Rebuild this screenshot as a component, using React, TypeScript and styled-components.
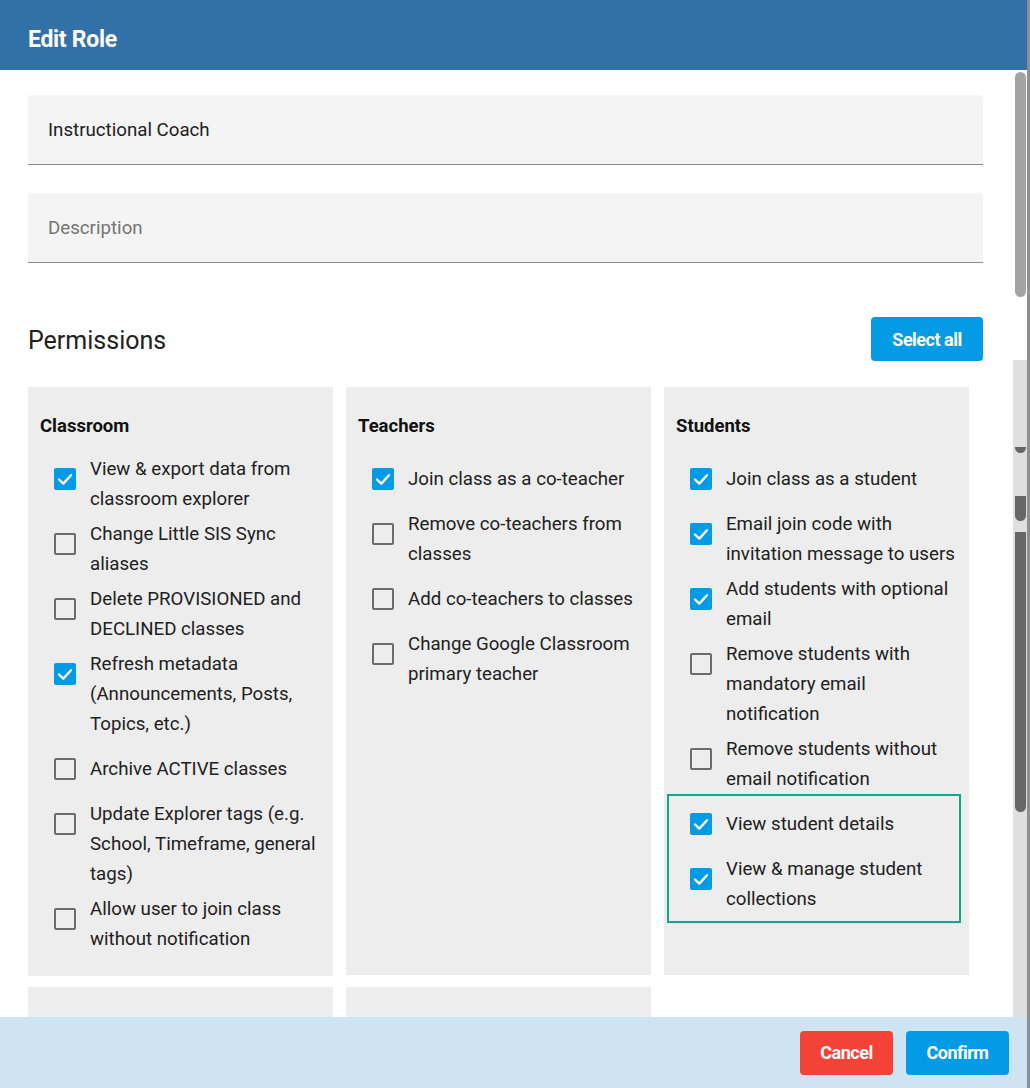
import React, { useState } from 'react';
import styled, { createGlobalStyle } from 'styled-components';

const GlobalStyle = createGlobalStyle`
  html, body {
    margin: 0;
    padding: 0;
    overflow: hidden;
    background: #ffffff;
    font-family: Roboto, "Liberation Sans", sans-serif;
  }
  * {
    box-sizing: border-box;
  }
`;

const Page = styled.div`
  width: 1030px;
  height: 1088px;
  display: flex;
`;

const Dialog = styled.div`
  flex: 1;
  display: flex;
  flex-direction: column;
  min-width: 0;
`;

const Edge = styled.div`
  width: 3px;
  background: #8f8f8f;
`;

const Header = styled.header`
  height: 70px;
  flex-shrink: 0;
  background: #3270a8;
  display: flex;
  align-items: center;
  padding: 9px 28px 0;
`;

const Title = styled.h1`
  margin: 0;
  color: #ffffff;
  font-size: 23px;
  font-weight: 700;
  letter-spacing: -0.3px;
`;

const Body = styled.div`
  flex: 1;
  display: flex;
  min-height: 0;
`;

const Content = styled.div`
  flex: 1;
  overflow: hidden;
  padding: 25px 30px 0 28px;
`;

const Field = styled.div<{ $gap?: number }>`
  height: 70px;
  margin-bottom: ${(p) => p.$gap ?? 0}px;
  background: #f4f4f4;
  border-radius: 4px 4px 0 0;
  border-bottom: 1px solid #8a8a8a;
  display: flex;
  align-items: center;
  padding: 0 20px;
`;

const FieldText = styled.span<{ $placeholder?: boolean }>`
  font-size: 18.7px;
  color: ${(p) => (p.$placeholder ? '#757575' : '#212121')};
`;

const SectionRow = styled.div`
  margin-top: 54px;
  display: flex;
  align-items: center;
  justify-content: space-between;
`;

const SectionTitle = styled.h2`
  margin: 0;
  padding-top: 3px;
  font-size: 25px;
  font-weight: 400;
  color: #212121;
`;

const Button = styled.button<{ $tone: 'blue' | 'red'; $width: number }>`
  height: 44px;
  width: ${(p) => p.$width}px;
  border: none;
  border-radius: 4px;
  background: ${(p) => (p.$tone === 'red' ? '#f44336' : '#039be5')};
  color: #ffffff;
  font-family: Roboto, "Liberation Sans", sans-serif;
  font-size: 18px;
  font-weight: 700;
  letter-spacing: -0.5px;
  cursor: pointer;
  padding: 0;
`;

const Grid = styled.div`
  margin-top: 26px;
  display: grid;
  grid-template-columns: repeat(3, 305px);
  column-gap: 13px;
  row-gap: 11px;
  align-items: start;
`;

const Card = styled.div<{ $height?: number }>`
  background: #ededed;
  padding: 27px 12px 22px;
  min-height: ${(p) => p.$height ?? 0}px;
  display: flex;
  flex-direction: column;
  gap: 5px;
`;

const CardTitle = styled.h3`
  margin: 0 0 11px;
  font-size: 18.5px;
  line-height: 24px;
  font-weight: 700;
  color: #111111;
`;

const Item = styled.label`
  display: flex;
  align-items: flex-start;
  cursor: pointer;
`;

const BoxSlot = styled.span`
  width: 50px;
  height: 50px;
  flex-shrink: 0;
  display: flex;
  align-items: center;
  justify-content: center;
`;

const Box = styled.span<{ $checked: boolean }>`
  width: 22px;
  height: 22px;
  border-radius: 2px;
  display: flex;
  align-items: center;
  justify-content: center;
  background: ${(p) => (p.$checked ? '#039be5' : 'transparent')};
  border: ${(p) => (p.$checked ? 'none' : '2px solid #6b6b6b')};
`;

const Label = styled.span`
  min-height: 50px;
  display: flex;
  align-items: center;
  font-size: 18.7px;
  line-height: 30px;
  color: #212121;
`;

const Highlight = styled.div`
  margin: -5px -4px 0 -9px;
  padding: 3px 2px 7px 7px;
  border: 2px solid #0fa889;
  display: flex;
  flex-direction: column;
  gap: 5px;
`;

const Rail = styled.div`
  width: 14px;
  display: flex;
  flex-direction: column;
`;

const LightThumb = styled.div`
  margin: 2px 0 0 2px;
  width: 11px;
  height: 225px;
  border-radius: 6px;
  background: #a3a3a3;
`;

const Track = styled.div`
  margin-top: 63px;
  flex: 1;
  background: #dfdfdf;
  display: flex;
  flex-direction: column;
  padding-left: 2px;
`;

const DarkPiece = styled.div<{ $top: number; $height: number; $round: string }>`
  margin-top: ${(p) => p.$top}px;
  width: 11px;
  height: ${(p) => p.$height}px;
  background: #666666;
  border-radius: ${(p) => p.$round};
`;

const Footer = styled.footer`
  height: 71px;
  flex-shrink: 0;
  background: #cfe4f2;
  display: flex;
  align-items: center;
  justify-content: flex-end;
  gap: 13px;
  padding: 0 18px 0 0;
`;

type Perm = { label: string; checked: boolean };

const Check = () => (
  <svg width="22" height="22" viewBox="0 0 22 22">
    <polyline
      points="5,11.5 9.3,15.6 17,7.2"
      fill="none"
      stroke="#ffffff"
      strokeWidth="2.4"
      strokeLinecap="round"
      strokeLinejoin="round"
    />
  </svg>
);

function PermItem({ perm, onToggle }: { perm: Perm; onToggle: () => void }) {
  return (
    <Item onClick={onToggle}>
      <BoxSlot>
        <Box $checked={perm.checked}>{perm.checked ? <Check /> : null}</Box>
      </BoxSlot>
      <Label>{perm.label}</Label>
    </Item>
  );
}

const initial: Record<string, Perm[]> = {
  Classroom: [
    { label: 'View & export data from classroom explorer', checked: true },
    { label: 'Change Little SIS Sync aliases', checked: false },
    { label: 'Delete PROVISIONED and DECLINED classes', checked: false },
    { label: 'Refresh metadata (Announcements, Posts, Topics, etc.)', checked: true },
    { label: 'Archive ACTIVE classes', checked: false },
    { label: 'Update Explorer tags (e.g. School, Timeframe, general tags)', checked: false },
    { label: 'Allow user to join class without notification', checked: false },
  ],
  Teachers: [
    { label: 'Join class as a co-teacher', checked: true },
    { label: 'Remove co-teachers from classes', checked: false },
    { label: 'Add co-teachers to classes', checked: false },
    { label: 'Change Google Classroom primary teacher', checked: false },
  ],
  Students: [
    { label: 'Join class as a student', checked: true },
    { label: 'Email join code with invitation message to users', checked: true },
    { label: 'Add students with optional email', checked: true },
    { label: 'Remove students with mandatory email notification', checked: false },
    { label: 'Remove students without email notification', checked: false },
    { label: 'View student details', checked: true },
    { label: 'View & manage student collections', checked: true },
  ],
};

export default function App() {
  const [perms, setPerms] = useState(initial);

  const toggle = (group: string, index: number) => {
    setPerms((prev) => ({
      ...prev,
      [group]: prev[group].map((p, i) => (i === index ? { ...p, checked: !p.checked } : p)),
    }));
  };

  const selectAll = () => {
    const next: Record<string, Perm[]> = {};
    Object.keys(perms).forEach((k) => {
      next[k] = perms[k].map((p) => ({ ...p, checked: true }));
    });
    setPerms(next);
  };

  const students = perms.Students;

  return (
    <>
      <GlobalStyle />
      <Page>
        <Dialog>
          <Header>
            <Title>Edit Role</Title>
          </Header>
          <Body>
            <Content>
              <Field $gap={28}>
                <FieldText>Instructional Coach</FieldText>
              </Field>
              <Field>
                <FieldText $placeholder>Description</FieldText>
              </Field>

              <SectionRow>
                <SectionTitle>Permissions</SectionTitle>
                <Button $tone="blue" $width={112} onClick={selectAll}>
                  Select all
                </Button>
              </SectionRow>

              <Grid>
                <Card $height={588}>
                  <CardTitle>Classroom</CardTitle>
                  {perms.Classroom.map((p, i) => (
                    <PermItem key={p.label} perm={p} onToggle={() => toggle('Classroom', i)} />
                  ))}
                </Card>
                <Card $height={588}>
                  <CardTitle>Teachers</CardTitle>
                  {perms.Teachers.map((p, i) => (
                    <PermItem key={p.label} perm={p} onToggle={() => toggle('Teachers', i)} />
                  ))}
                </Card>
                <Card $height={588}>
                  <CardTitle>Students</CardTitle>
                  {students.slice(0, 5).map((p, i) => (
                    <PermItem key={p.label} perm={p} onToggle={() => toggle('Students', i)} />
                  ))}
                  <Highlight>
                    {students.slice(5).map((p, i) => (
                      <PermItem key={p.label} perm={p} onToggle={() => toggle('Students', i + 5)} />
                    ))}
                  </Highlight>
                </Card>
                {/* next row of groups, scrolled below the footer */}
                <Card $height={200} />
                <Card $height={200} />
              </Grid>
            </Content>
            <Rail>
              <LightThumb />
              <Track>
                <DarkPiece $top={87} $height={6} $round="0 0 6px 6px" />
                <DarkPiece $top={43} $height={25} $round="0 0 6px 6px" />
                <DarkPiece $top={11} $height={280} $round="0 0 6px 6px" />
              </Track>
            </Rail>
          </Body>
          <Footer>
            <Button $tone="red" $width={93}>
              Cancel
            </Button>
            <Button $tone="blue" $width={103}>
              Confirm
            </Button>
          </Footer>
        </Dialog>
        <Edge />
      </Page>
    </>
  );
}
